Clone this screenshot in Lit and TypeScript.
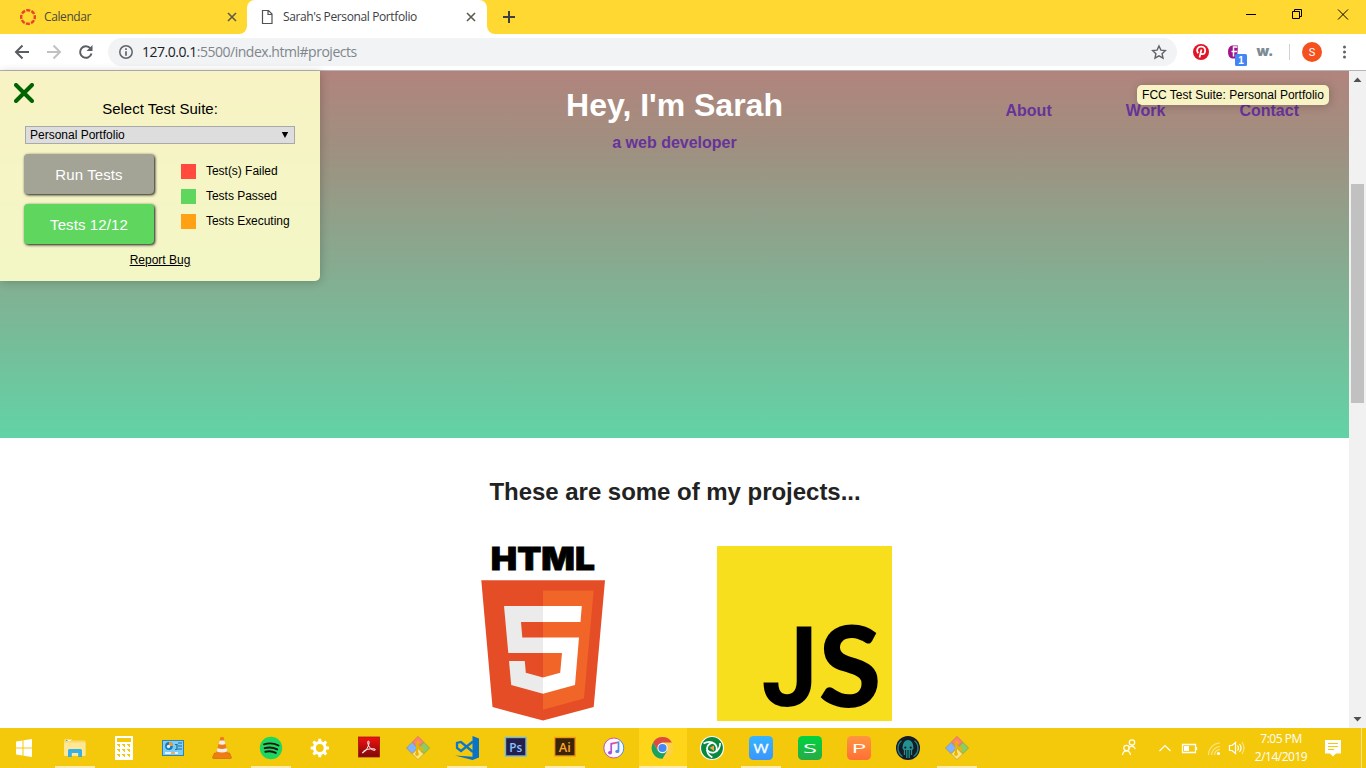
import { LitElement, html, svg, css } from "lit";
import { customElement } from "lit/decorators.js";
import { classMap } from "lit/directives/class-map.js";

const gitIcon = (cx: number) => svg`
  <g transform="translate(${cx} 20) rotate(45)" stroke-width=".6">
    <rect x="-8.2" y="-8.2" width="7.9" height="7.9" fill="#ff8080" stroke="#c06a50"/>
    <rect x=".3" y="-8.2" width="7.9" height="7.9" fill="#8ccc66" stroke="#7a9a50"/>
    <rect x="-8.2" y=".3" width="7.9" height="7.9" fill="#80b3ff" stroke="#8a8a70"/>
    <rect x=".3" y=".3" width="7.9" height="7.9" fill="#ffe680" stroke="#b89a40"/>
  </g>
  <path d="M${cx - 1} 14V26M${cx - 2} 16L${cx + 3} 21" stroke="#e8b400" stroke-width="2" fill="none"/>
  <circle cx="${cx}" cy="14.5" r="1.8" fill="#e8b400"/><circle cx="${cx + 3.5}" cy="21" r="1.9" fill="#e8b400"/><circle cx="${cx - 1}" cy="26" r="1.9" fill="#e8b400"/>`;

const teeth = [0, 45, 90, 135, 180, 225, 270, 315];

const apps = [
  { name: "Explorer", open: true, art: svg`
    <path d="M64 12.5q0-1.5 1.500-1.500h6l1 1.500h12q1 0 1 1v13.500q0 1-1 1h-19.500q-1 0-1-1z" fill="#fbd96c"/>
    <path d="M64 14.500h21.500v12.500q0 1-1 1h-19.500q-1 0-1-1z" fill="#ffe794"/><path d="M66 12.500h4.500" stroke="#fff"/><path d="M66 12.500h1.500" stroke="#35a8dc"/>
    <path d="M68 29v-6.500q0-1.500 1.500-1.500h11q1.500 0 1.500 1.500v6.500h-3.800v-4h-6.400v4z" fill="#38b0e4"/>` },
  { name: "Calculator", open: false, art: svg`
    <rect x="115" y="8" width="18" height="24" fill="#fff"/><rect x="117" y="10" width="14" height="4" fill="#f4c90b"/>
    ${[16, 21, 26].map((y) => [117, 122, 127].map((x) => svg`<path d="M${x} ${y}h3v3h-1v-1h-1v-1h-1z" fill="#f4c90b"/>`))}` },
  { name: "Control Panel", open: false, art: svg`
    <rect x="162.500" y="12.500" width="21" height="15" fill="#7acdf5" stroke="#3583a7"/>
    <circle cx="169" cy="18" r="3.900" fill="#1b78bd"/><path d="M169 18v-4a4 4 0 0 1 4 4z" fill="#f29a36"/><circle cx="168.500" cy="18.500" r="1.700" fill="#d9f2fd"/>
    <path d="M175 16.500h2v5h-2M178 15h4M178 18h4M178 21h4" stroke="#216d9b" stroke-width="1.200" fill="none"/><path d="M165 25h13" stroke="#fff" stroke-width="1.500"/><path d="M171 25h4" stroke="#f29a36" stroke-width="1.500"/>` },
  { name: "VLC", open: false, art: svg`
    <path d="M214.500 25h15l2 4.500q0 1-1 1h-17q-1 0-1-1z" fill="#ee7d13" stroke="#b75a0a" stroke-width=".5"/>
    <path d="M220.500 9h3l4.500 16.500q-6 3.500-12 0z" fill="#ee7b17"/><path d="M219.600 12.500h4.900l1 3.500q-3.500 1.500-6.900 0zM217.500 20q4.500 2 9.100 0l.9 3.300q-5.500 2.500-10.900 0z" fill="#eee"/>` },
  { name: "Spotify", open: true, art: svg`
    <circle cx="271" cy="20" r="11.200" fill="#1ed760"/><path d="M264 16.300q8-2.300 14.500 1.200M264.700 20.200q6.500-1.800 12.500 1.200M265.300 23.700q6-1.300 10.500 1.200" fill="none" stroke="#191414" stroke-width="1.900" stroke-linecap="round"/>` },
  { name: "Settings", open: false, art: svg`
    <g transform="translate(319.800 20)"><circle r="5.400" fill="none" stroke="#fff" stroke-width="3"/>
    ${teeth.map((a) => svg`<rect x="-1.500" y="-9.200" width="3" height="4" rx=".6" fill="#fff" transform="rotate(${a})"/>`)}</g>` },
  { name: "Acrobat", open: false, art: svg`
    <rect x="358.500" y="9" width="21" height="20" fill="url(#pdf)" stroke="#a31515" stroke-width=".8"/>
    <path d="M362.500 25c2-.4 6-5 6.600-10.500c0-2-1.600-2-1.300.3c.5 4.500 4.500 7.800 7 7.500c1.800-.8-.5-2-4.500-1.400c-4 .4-8 2.300-7.800 4.100z" fill="none" stroke="#fff" stroke-width="1"/>` },
  { name: "Git Bash", open: false, art: gitIcon(418) },
  { name: "VS Code", open: true, art: svg`
    <path d="M472.500 8l6.500 2.500v19l-6.500 2.500l-17.500-4.500l17.500 1.200z" fill="#0a74c4"/><path d="M473 13.500l-12 9.500l-4-3v-5l4-1l12 10" fill="none" stroke="#0a78c8" stroke-width="2.300"/>` },
  { name: "Photoshop", open: false, art: svg`
    <rect x="505.500" y="9.500" width="20.500" height="18.500" fill="#261f4a" stroke="#6eb6ee" stroke-width="1.400"/><text x="509.300" y="23.600" font-size="12.500" font-weight="600" fill="#82c4ff" textLength="13" lengthAdjust="spacingAndGlyphs">Ps</text>` },
  { name: "Illustrator", open: true, art: svg`
    <rect x="554.700" y="9.500" width="20.500" height="18.500" fill="#3a2508" stroke="#f39a16" stroke-width="1.400"/><text x="558.800" y="23.600" font-size="12.500" font-weight="600" fill="#ffa62b" textLength="12" lengthAdjust="spacingAndGlyphs">Ai</text>` },
  { name: "iTunes", open: false, art: svg`
    <circle cx="613.800" cy="20" r="10" fill="#fbf7fc" stroke="url(#tune)" stroke-width="1"/>
    <path d="M611.200 24.500v-8.700l7.300-1.600v8.800" fill="none" stroke="url(#tune)" stroke-width="1.700"/><ellipse cx="610" cy="24.700" rx="2" ry="1.700" fill="#9a52d9"/><ellipse cx="617.300" cy="23.400" rx="2" ry="1.700" fill="#4f8ce8"/>` },
  { name: "Chrome", open: true, active: true, art: svg`
    <circle cx="662.500" cy="20" r="10.800" fill="#ffcf48"/><path d="M653.100 14.600A10.800 10.800 0 0 1 671.900 14.600H662.500L657.800 22.700z" fill="#dd4b3e"/>
    <path d="M653.100 14.600A10.800 10.800 0 0 0 662.500 30.800L667.200 22.700H657.800z" fill="#1aa261"/><circle cx="662.500" cy="20" r="5.200" fill="#f4f4f4"/><circle cx="662.500" cy="20" r="4.100" fill="#4587f3"/>` },
  { name: "Image tool", open: false, art: svg`
    <circle cx="712" cy="20" r="11.500" fill="#07893f" stroke="#fff" stroke-width="1.200"/>
    <g fill="none" stroke="#fff" stroke-width="1.700">${[0, 120, 240].map((a) => svg`<path transform="rotate(${a} 712 20)" d="M703.500 15.500q6-3.500 11 .2q3.200 3 1.800 7.500"/>`)}</g><path d="M709.500 19.700l4.500-2.200v5.500z" fill="#f5a14a"/>` },
  { name: "Writer", open: true, art: svg`
    <rect x="749" y="8" width="24" height="24" rx="4.500" fill="url(#wps)"/><text x="753.500" y="24.500" font-size="12.500" fill="#fff" stroke="#fff" stroke-width=".3" textLength="15" lengthAdjust="spacingAndGlyphs">W</text>` },
  { name: "Spreadsheets", open: false, art: svg`
    <rect x="798" y="8" width="24" height="24" rx="4.500" fill="url(#sheet)"/><text x="803" y="24.500" font-size="12.500" fill="#fff" textLength="14" lengthAdjust="spacingAndGlyphs">S</text>` },
  { name: "Presentation", open: false, art: svg`
    <rect x="847" y="8" width="24" height="24" rx="4.500" fill="url(#slide)"/><text x="851.500" y="24.500" font-size="12.500" fill="#fff" textLength="15" lengthAdjust="spacingAndGlyphs">P</text>` },
  { name: "GitKraken", open: false, art: svg`
    <circle cx="908" cy="20" r="12" fill="#141a26"/><path d="M902.500 28.500a9.700 9.700 0 0 1-1-15.700M913.500 28.500a9.700 9.700 0 0 0 1-15.700" fill="none" stroke="#1c8385" stroke-width="1.400"/>
    <path d="M902.500 19.500q.5-7.500 5.500-7.500t5.500 7.500q0 2-1.500 2.500h-8q-1.500-.5-1.500-2.500z" fill="#23918f"/><path d="M904.500 21v6M906.800 21v9M909.200 21v9M911.500 21v6" stroke="#23918f" stroke-width="1.300"/><circle cx="905.300" cy="19.600" r="1.100" fill="#141a26"/><circle cx="910.700" cy="19.600" r="1.100" fill="#141a26"/>` },
  { name: "Git GUI", open: true, art: gitIcon(957) },
];

@customElement("browser-chrome")
class BrowserChrome extends LitElement {
  static styles = css`
    :host { display: block; font-family: "Open Sans", "Noto Sans", sans-serif; }
    .tabs { height: 34px; background: #ffd932; display: flex; }
    .tab { box-sizing: border-box; display: flex; align-items: center; height: 34px; color: #4b4a3b; font-size: 12px; }
    .tab.first { width: 247px; padding: 0 10px 0 20px; }
    .tab.active { width: 240px; padding: 0 11px 0 13px; background: #fff; border-radius: 8px 8px 0 0; color: #3c4043; }
    .corner { background: #fff; width: 8px; height: 8px; align-self: flex-end; flex: none; }
    .corner i { display: block; width: 8px; height: 8px; background: #ffd932; border-radius: 0 0 0 8px; }
    .tabs .corner.left { margin-left: -8px; }
    .corner.left i { border-radius: 0 0 8px 0; }
    .label { flex: 1; white-space: nowrap; line-height: 16px; }
    .first .label { padding-left: 8px; letter-spacing: -.4px; }
    .active .label { padding-left: 9px; letter-spacing: -.38px; }
    .plus { margin: 10px 0 0 7px; }
    .window { margin-left: auto; }
    svg { display: block; flex: none; }
    .bar { height: 36px; background: #fff; border-bottom: 1px solid #b6b4b6; display: flex; align-items: center; }
    .address { width: 1069px; height: 28px; border-radius: 14px; background: #f1f3f4; display: flex; align-items: center; font-size: 14px; color: #80868b; }
    .url { flex: 1; padding-left: 8px; letter-spacing: -.48px; line-height: 20px; }
    .host { color: #202124; }
  `;
  close = () => html`<svg width="10" height="10" viewBox="0 0 10 10"><path d="M1 1l8 8M9 1L1 9" stroke="#5b5a4c" stroke-width="1.600"/></svg>`;
  render() {
    return html`
      <div class="tabs">
        <div class="tab first">
          <svg width="16" height="16" viewBox="0 0 16 16"><circle cx="8" cy="8" r="6.800" fill="none" stroke="#e8422a" stroke-width="2.400" stroke-dasharray="4.100 1.240" stroke-dashoffset="2"/></svg>
          <span class="label">Calendar</span>${this.close()}
        </div>
        <span class="corner left"><i></i></span>
        <div class="tab active">
          <svg width="14" height="16" viewBox="0 0 14 16"><path d="M2.500 1.500h6l3.500 3.500v9.500h-9.500zM8 1.500v4h4" fill="none" stroke="#505356" stroke-width="1.200"/></svg>
          <span class="label">Sarah's Personal Portfolio</span>${this.close()}
        </div>
        <span class="corner"><i></i></span>
        <svg class="plus" width="14" height="14" viewBox="0 0 14 14"><path d="M7 1v12M1 7h12" stroke="#3c4043" stroke-width="2"/></svg>
        <svg class="window" width="126" height="34" viewBox="1240 0 126 34" fill="none" stroke="#000" stroke-width="1">
          <path d="M1246 14.500h10M1294.500 9.500h7v7h-2M1294.500 11.500v-2M1338 9.500l10 10M1348 9.500l-10 10"/><path d="M1292.500 11.500h7v7h-7z"/>
        </svg>
      </div>
      <div class="bar">
        <svg width="108" height="36" viewBox="0 34 108 36" fill="none" stroke-width="2">
          <path d="M29 52H16M22.500 45.500L16 52l6.500 6.500" stroke="#5a5d61"/><path d="M47 52h13M53.500 45.500L60 52l-6.500 6.500" stroke="#bfc1c3"/>
          <path d="M90.500 48.500A5.800 5.800 0 1 0 91.500 53.500" stroke="#5a5d61"/><path d="M92.500 45v6h-6z" fill="#5a5d61"/>
        </svg>
        <div class="address">
          <svg width="26" height="28" viewBox="108 38 26 28"><circle cx="126" cy="52" r="6.200" fill="none" stroke="#5f6368" stroke-width="1.500"/><path d="M126 48.300v1.700M126 51.300v4.500" stroke="#5f6368" stroke-width="1.700"/></svg>
          <span class="url"><span class="host">127.0.0.1</span>:5500/index.html#projects</span>
          <svg width="37" height="28" viewBox="1140 38 37 28"><path d="M1159 46l1.900 4.100 4.500.5-3.300 3.100.9 4.500-4-2.300-4 2.300.9-4.500-3.300-3.100 4.500-.5z" fill="none" stroke="#5f6368" stroke-width="1.400"/></svg>
        </div>
        <svg width="189" height="36" viewBox="1177 34 189 36">
          <circle cx="1201" cy="52" r="8" fill="#e11428"/>
          <path d="M1198.200 53.300c-2.700-3.800.1-7 3.500-6.700c4.700.5 4.300 7.200.7 7.500q-1.500 0-1.900-1M1201.500 49.500l-2 8" fill="none" stroke="#fff" stroke-width="1.700"/>
          <path d="M1238 45.500h-6q-4 1-4 6.500t4 6.500h5z" fill="#a0148c"/><path d="M1237.500 47h-4v9.500M1231.500 51.500h5.500" fill="none" stroke="#fff" stroke-width="1.500"/>
          <rect x="1235" y="54" width="12" height="12" rx="1.500" fill="#4285f4"/><text x="1238.200" y="64" font-family="Liberation Sans" font-size="10" font-weight="700" fill="#fff">1</text>
          <text x="1256.500" y="56" font-family="Inter, sans-serif" font-size="14" font-weight="900" fill="#7c8c95" textLength="17" lengthAdjust="spacingAndGlyphs">w.</text>
          <path d="M1289.500 44v16" stroke="#d0d1d3"/><circle cx="1312" cy="52" r="10" fill="#f4511e"/><text x="1312" y="56" text-anchor="middle" font-family="Roboto, sans-serif" font-size="11" fill="#fff">S</text>
          <g fill="#5f6368"><circle cx="1344.500" cy="47" r="1.500"/><circle cx="1344.500" cy="52" r="1.500"/><circle cx="1344.500" cy="57" r="1.500"/></g>
        </svg>
      </div>`;
  }
}

@customElement("test-panel")
class TestPanel extends LitElement {
  static styles = css`
    :host { display: block; box-sizing: border-box; width: 320px; height: 210px; padding-top: 12px; background: rgba(255,255,204,.9); border-radius: 0 0 5px 0; box-shadow: 1px 1px 10px rgba(0,0,0,.2); font: 12px "Liberation Sans", Arial, sans-serif; color: #000; }
    .x { display: block; margin-left: 14px; }
    .title { font-size: 15px; line-height: 18px; text-align: center; margin-top: -3px; }
    .select { box-sizing: border-box; display: flex; justify-content: space-between; align-items: center; width: 270px; height: 18px; margin: 8px 0 0 25px; padding: 0 5px 0 4px; border: 1px solid #a9a9a9; background: #ddd; line-height: 16px; }
    .arrow { display: block; }
    .body { display: flex; margin: 10px 0 0 24px; }
    .buttons { display: grid; gap: 10px; width: 130px; }
    .btn { height: 40px; line-height: 41px; border-radius: 4px; text-align: center; font-size: 15px; letter-spacing: .1px; color: #fff; background: #a3a396; box-shadow: 1px 1px 3px #111; }
    .btn.ok { background: #5fd75f; }
    .legend { padding: 7px 0 0 27px; }
    .row { display: flex; align-items: center; height: 25px; gap: 10px; }
    .row span { margin-bottom: 6px; letter-spacing: -.03px; }
    .sw { width: 15px; height: 15px; margin-bottom: 4px; background: #ff4a3d; }
    .sw.pass { background: #5fd75f; }
    .sw.run { background: #ffa114; }
    .bug { text-align: center; text-decoration: underline; margin-top: 9px; line-height: 14px; }
  `;
  render() {
    return html`
      <svg class="x" width="20" height="20" viewBox="0 0 20 20"><path d="M2 2l16 16M18 2L2 18" stroke="#006400" stroke-width="4" stroke-linecap="round"/></svg>
      <div class="title">Select Test Suite:</div>
      <div class="select"><span>Personal Portfolio</span><svg class="arrow" width="8" height="8" viewBox="0 0 8 8"><path d="M.8 1h6.400l-3.200 6z"/></svg></div>
      <div class="body">
        <div class="buttons"><div class="btn">Run Tests</div><div class="btn ok">Tests 12/12</div></div>
        <div class="legend">
          <div class="row"><i class="sw"></i><span>Test(s) Failed</span></div>
          <div class="row"><i class="sw pass"></i><span>Tests Passed</span></div>
          <div class="row"><i class="sw run"></i><span>Tests Executing</span></div>
        </div>
      </div>
      <div class="bug">Report Bug</div>`;
  }
}

@customElement("portfolio-page")
class PortfolioPage extends LitElement {
  static styles = css`
    :host { display: flex; position: relative; height: 657px; background: #fff; font-family: "Liberation Sans", Arial, sans-serif; }
    .page { width: 1349px; }
    .hero { box-sizing: border-box; height: 367px; background: linear-gradient(#b1847c, #a08f80 20%, #62d3a6); display: grid; grid-template-columns: 1fr 1fr 1fr; align-items: start; }
    .intro { grid-column: 2; text-align: center; padding-top: 16px; }
    h1 { margin: 0; font-size: 32px; line-height: 37px; color: #fff; }
    .sub { font-size: 16px; font-weight: 700; color: #639; line-height: 18px; margin-top: 10px; }
    nav { display: flex; justify-content: flex-end; gap: 74px; padding: 31px 50px 0 0; font-size: 16px; font-weight: 700; line-height: 18px; color: #639; }
    h2 { margin: 40px 0 0; padding-left: 1px; text-align: center; font-size: 24px; letter-spacing: -.03px; line-height: 28px; color: #222; }
    .work { display: flex; justify-content: center; gap: 87px; margin-top: 40px; padding-right: 2px; }
    .work svg { display: block; width: 175px; height: 175px; overflow: visible; }
    .scroll { width: 17px; background: #f1f1f1; display: flex; flex-direction: column; align-items: center; }
    .thumb { width: 13px; height: 219px; margin: 96px 0 auto; background: #c1c1c1; }
    .scroll svg { display: block; }
    test-panel { position: absolute; left: 0; top: 0; }
    .tag { position: absolute; top: 14px; right: 37px; box-sizing: border-box; width: 192px; height: 20px; border-radius: 5px; background: rgba(255,255,204,.9); box-shadow: 1px 1px 10px rgba(0,0,0,.2); font-size: 12px; line-height: 20px; text-align: center; white-space: nowrap; color: #000; }
  `;
  render() {
    return html`
      <main class="page">
        <header class="hero">
          <div class="intro"><h1>Hey, I'm Sarah</h1><div class="sub">a web developer</div></div>
          <nav><span>About</span><span>Work</span><span>Contact</span></nav>
        </header>
        <h2>These are some of my projects...</h2>
        <div class="work">
          <svg viewBox="455 546 175 175">
            <text x="490.800" y="569.500" font-family="Inter, sans-serif" font-weight="900" font-size="32" stroke="#000" stroke-width=".8" textLength="104" lengthAdjust="spacingAndGlyphs">HTML</text>
            <path d="M481.300 580.200H605L593.700 707L543 720.500L492.500 707z" fill="#e44d26"/><path d="M543 590.600H593.700L584 698.500L543 709.800z" fill="#f16529"/>
            <path d="M543 606H504L508.300 653H543V637.500H522.300L521 622H543zM543 677.600L525.800 672.800L524.800 661H509L511.200 685L543 693.800z" fill="#ebebeb"/>
            <path d="M543 606V622H580.500L581.800 606zM543 637.500V653H562L560.200 672.800L543 677.600V693.800L575 685L579 637.500z" fill="#fff"/>
          </svg>
          <svg viewBox="0 0 175 175"><rect width="175" height="175" fill="#f7df1e"/><text x="44.500" y="160.300" font-family="Roboto, sans-serif" font-weight="700" font-size="112" textLength="56" lengthAdjust="spacingAndGlyphs">J</text><text x="101.500" y="160.500" font-family="Lato, sans-serif" font-weight="900" font-size="112" textLength="63" lengthAdjust="spacingAndGlyphs">S</text></svg>
        </div>
      </main>
      <aside class="scroll">
        <svg width="17" height="17" viewBox="0 0 17 17"><path d="M4.500 11h8l-4-4.500z" fill="#505050"/></svg>
        <div class="thumb"></div>
        <svg width="17" height="17" viewBox="0 0 17 17"><path d="M4.500 6h8l-4 4.500z" fill="#505050"/></svg>
      </aside>
      <test-panel></test-panel>
      <div class="tag">FCC Test Suite: Personal Portfolio</div>`;
  }
}

@customElement("task-bar")
class TaskBar extends LitElement {
  static styles = css`
    :host { display: flex; position: relative; height: 40px; background: #f4c90b; font-family: "Open Sans", "Noto Sans", sans-serif; }
    svg { display: block; flex: none; }
    .app { box-sizing: border-box; width: 49px; height: 40px; display: flex; flex-direction: column; align-items: center; }
    .app svg { margin-bottom: -2px; }
    .mark { width: 40px; height: 2px; background: #fdeaa8; }
    .active { background: linear-gradient(90deg, #f4c90b 1px, #ffd51a 1px); }
    .active .mark { width: 48px; align-self: flex-end; }
    .tray { margin-left: auto; }
    .clock { width: 62px; text-align: center; font-size: 12px; line-height: 18px; padding-top: 2px; color: #fff; letter-spacing: -.5px; }
    .peek { width: 4px; border-left: 1px solid #fbe38a; }
  `;
  render() {
    return html`
      <svg width="50" height="40" viewBox="0 0 50 40"><path d="M16 13.400l6.500-1v7h-6.500zM23.500 12.200l8.500-1.200v8.400h-8.500zM16 20.500h6.500v7l-6.500-1zM23.500 20.500h8.500v8.500l-8.500-1.300z" fill="#fff"/></svg>
      ${apps.map((a, i) => html`
        <div class=${classMap({ app: true, active: !!a.active })} title=${a.name}>
          <svg width="49" height="40" viewBox="${50 + 49 * i} 0 49 40">
            <defs>
              <linearGradient id="pdf" x2="0" y2="1"><stop stop-color="#f41010"/><stop offset="1" stop-color="#7d0909"/></linearGradient>
              <linearGradient id="tune"><stop stop-color="#b14fe0"/><stop offset=".5" stop-color="#f0507f"/><stop offset="1" stop-color="#3f95ee"/></linearGradient>
              <linearGradient id="wps" x2="0" y2="1"><stop stop-color="#36b4ff"/><stop offset="1" stop-color="#3b95fc"/></linearGradient>
              <linearGradient id="sheet" x2="0" y2="1"><stop stop-color="#00d43c"/><stop offset="1" stop-color="#27aa48"/></linearGradient>
              <linearGradient id="slide" x2="0" y2="1"><stop stop-color="#ff9640"/><stop offset="1" stop-color="#ff6f36"/></linearGradient>
            </defs>${a.art}
          </svg>
          ${a.open ? html`<i class="mark"></i>` : null}
        </div>`)}
      <svg class="tray" width="140" height="40" viewBox="1110 0 140 40" fill="none" stroke="#fff" stroke-width="1.200">
        <circle cx="1132" cy="14.500" r="2.700"/><path d="M1128.500 20.500q3.500-5 7 .5"/><circle cx="1126.500" cy="20" r="2.700"/><path d="M1122.500 27q.5-4.200 4-4.200t4 4.200"/>
        <path d="M1159.500 23l5.500-5.500l5.500 5.500"/><path d="M1182.500 16.500h13v8h-13zM1196.500 19v3" stroke-width="1.300"/><rect x="1184" y="18" width="5" height="5" fill="#fff" stroke="none"/>
        <g stroke="#fbe58c"><path d="M1208.500 27a12 12 0 0 1 11.500-12M1211.500 27a9 9 0 0 1 8.500-8.500M1214.500 27a6 6 0 0 1 5.500-5.500"/></g><circle cx="1218.500" cy="25.500" r="1.600" fill="#fff" stroke="none"/>
        <path d="M1229.500 17.500h2.500l3.500-3v11l-3.500-3h-2.500z"/><path d="M1237.500 17.500q2 2.500 0 5M1239.500 16q3.200 4 0 8"/><path d="M1242 14q4 6 0 12" stroke="#fbe58c"/>
      </svg>
      <div class="clock">7:05 PM<br />2/14/2019</div>
      <svg width="49" height="40" viewBox="1312 0 49 40"><path d="M1325 12h16v13.500h-5l-3 3-3-3h-5z" fill="#fff"/><path d="M1328 15.500h10M1328 18.500h10M1328 21.500h6" stroke="#f4c90b"/></svg>
      <div class="peek"></div>`;
  }
}

@customElement("app-root")
class AppRoot extends LitElement {
  static styles = css`
    :host { display: flex; flex-direction: column; width: 1366px; height: 768px; overflow: hidden; }
  `;
  render() {
    return html`<browser-chrome></browser-chrome><portfolio-page></portfolio-page><task-bar></task-bar>`;
  }
}
